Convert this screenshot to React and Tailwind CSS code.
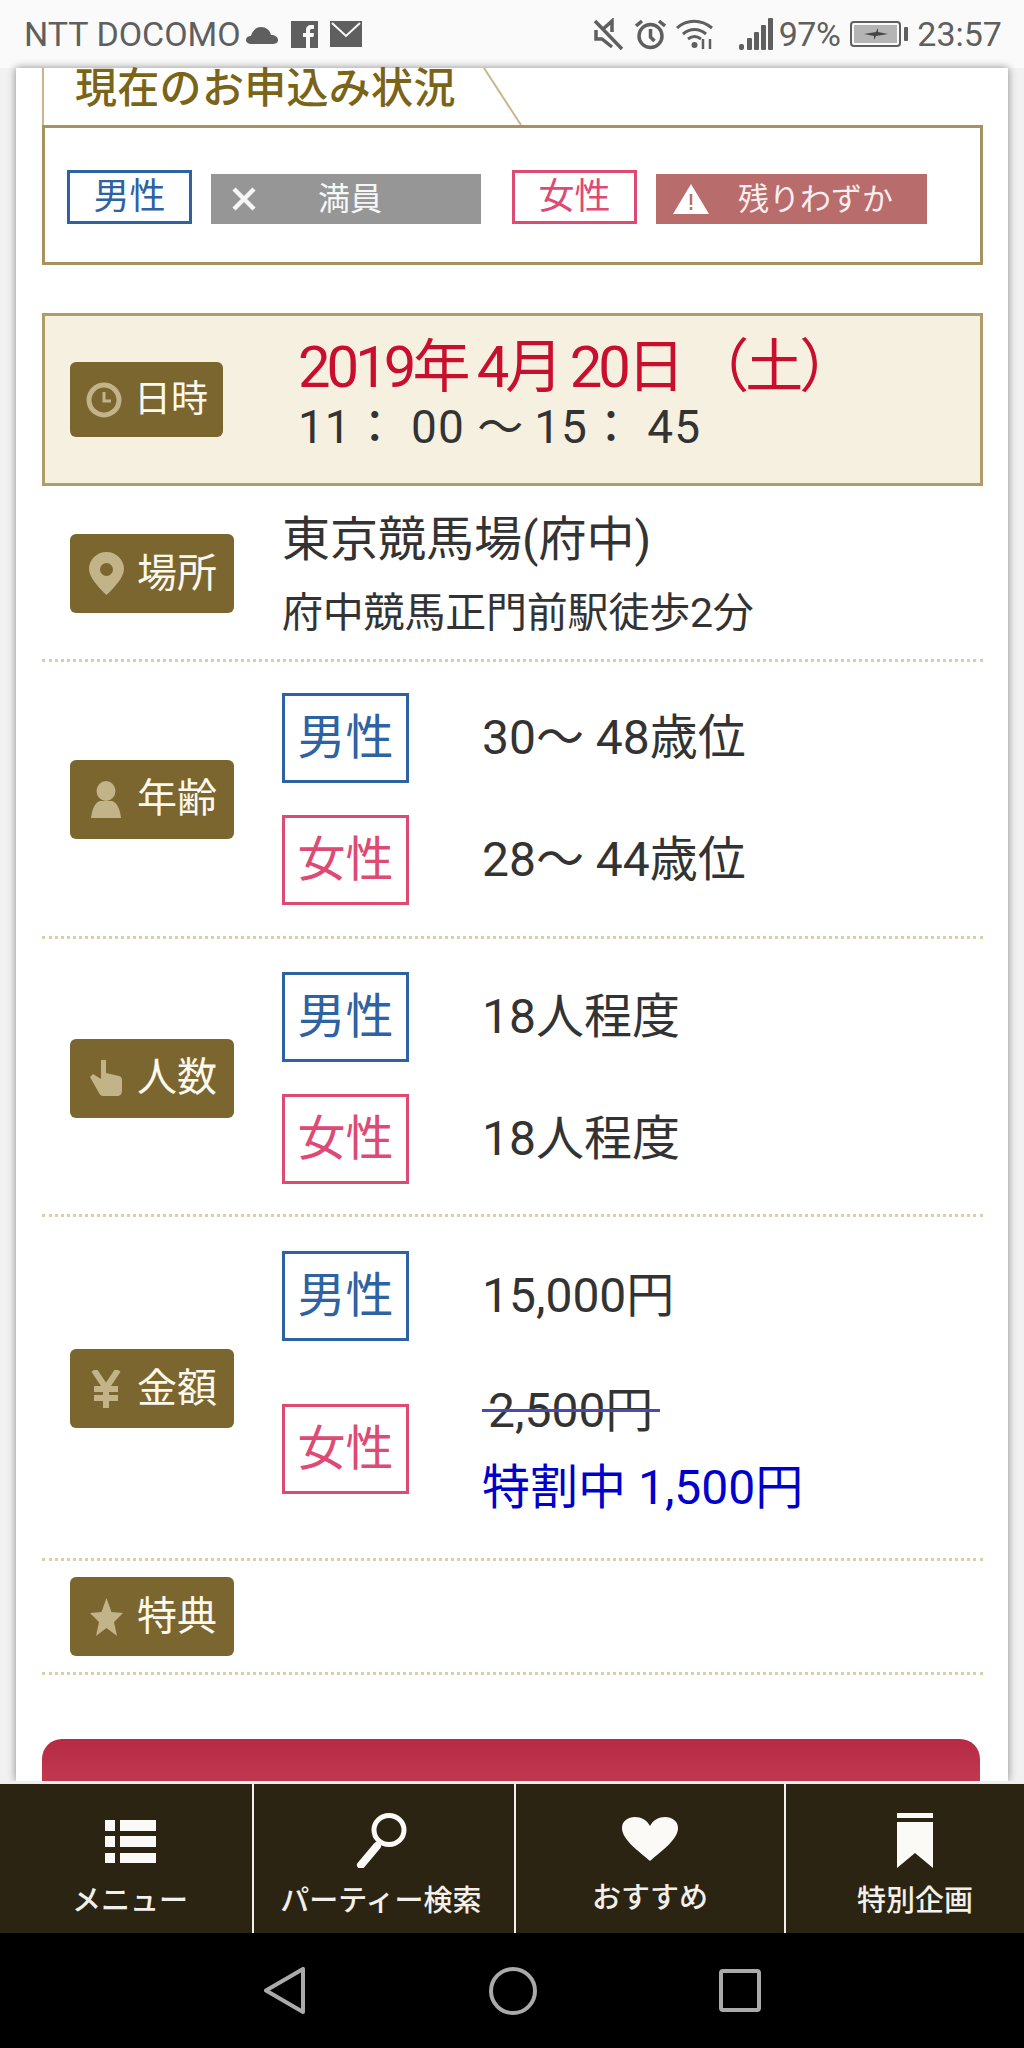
const blue = "border-[#2d62a3] text-[#2d62a3]";
const pink = "border-[#dd4a74] text-[#dd4a74]";

function Gender({ female, small }) {
  const tone = female ? pink : blue;
  if (small) {
    return (
      <div className={`flex h-[54px] w-[125px] items-center justify-center border-[3px] text-[36px] leading-none ${tone}`}>
        {female ? "女性" : "男性"}
      </div>
    );
  }
  return (
    <div className={`flex h-[90px] w-[127px] shrink-0 items-center justify-center border-[3px] text-[48px] leading-none ${tone}`}>
      {female ? "女性" : "男性"}
    </div>
  );
}

function Badge({ icon, children, narrow }) {
  return (
    <div className={`flex shrink-0 items-center rounded-[6px] bg-[#7b6630] text-[#fbf8ee] ${narrow ? "h-[75px] w-[153px] pl-[16px]" : "h-[79px] w-[164px] pl-[18px]"}`}>
      <div className="flex w-[36px] shrink-0 justify-center">{icon}</div>
      <span className={`leading-none ${narrow ? "ml-[12px] text-[37px]" : "ml-[13px] text-[40px]"}`}>{children}</span>
    </div>
  );
}

const iconTint = "#c2b388";

const ClockIcon = () => (
  <svg width="36" height="36" viewBox="0 0 36 36" fill="none" stroke={iconTint}>
    <circle cx="18" cy="18" r="15" strokeWidth="5" />
    <path d="M18 10v9h7" strokeWidth="3" />
  </svg>
);
const PinIcon = () => (
  <svg width="35" height="43" viewBox="0 0 35 43" fill={iconTint}>
    <path fillRule="evenodd" d="M17.5 0C7.8 0 0 7.6 0 17c0 8 9 18 17.5 26C26 35 35 25 35 17 35 7.6 27.200 0 17.500 0Zm0 11a6.500 6.500 0 1 1 0 13 6.500 6.500 0 0 1 0-13Z" />
  </svg>
);
const PersonIcon = () => (
  <svg width="30" height="37" viewBox="0 0 30 37" fill={iconTint}>
    <ellipse cx="15" cy="10" rx="9.500" ry="10" />
    <path d="M9 20h12c5 1.500 8 8 9 17H0C1 28 4 21.500 9 20Z" />
  </svg>
);
const HandIcon = () => (
  <svg width="32" height="36" viewBox="0 0 32 36" fill={iconTint}>
    <path d="M11 0h5v13l13 3c2 .500 3 2 3 4v11c0 3-2 5-5 5H13c-2 0-3-1-4-3L0 17l3-3 8 5Z" />
  </svg>
);
const YenIcon = () => (
  <svg width="30" height="38" viewBox="0 0 30 38" fill="none" stroke={iconTint} strokeWidth="6">
    <path d="M3 0l12 18L27 0M15 18v20M3 19h24M3 28h24" />
  </svg>
);
const StarIcon = () => (
  <svg width="33" height="38" viewBox="0 0 33 38" fill={iconTint}>
    <path d="M16.500 0l5 14 11.500 1-9 9 3 14-10.500-8L6 38l3-14-9-9 11.500-1Z" />
  </svg>
);

function StatusBar() {
  return (
    <div className="flex h-[68px] shrink-0 items-center bg-[#fafafa] pl-[24px] text-[34px] leading-none text-[#5f5f5f]">
      <span>NTT DOCOMO</span>
      <svg className="ml-[5px]" width="32" height="19" viewBox="0 0 32 19" fill="#5f5f5f">
        <path d="M6 19c-3.500 0-6-1.500-6-4s2-4 5-4c1-5 5-9 10-9 5 0 9 3 10 8 4 0 7 2 7 5s-2.500 4-6 4Z" />
      </svg>
      <svg className="ml-[13px]" width="27" height="27" viewBox="0 0 27 27">
        <rect width="27" height="27" fill="#5f5f5f" />
        <path d="M15 27V16h-3v-4h3V9c0-3 2-5 5-5h3v4h-2c-1.500 0-2 .500-2 2v2h4l-.500 4H19v11Z" fill="#fafafa" />
      </svg>
      <svg className="ml-[12px]" width="32" height="26" viewBox="0 0 32 26">
        <rect width="32" height="26" fill="#5f5f5f" />
        <path d="M2 2l14 13L30 2" fill="none" stroke="#fafafa" strokeWidth="2" />
      </svg>

      {/* right side */}
      <svg className="ml-[231px]" width="31" height="32" viewBox="0 0 31 32" fill="none" stroke="#5f5f5f" strokeWidth="3.500">
        <path d="M2 3l27 28M3 12v9h6l10 8M9 12l10-9v11" />
      </svg>
      <svg className="ml-[11px]" width="31" height="31" viewBox="0 0 31 31" fill="none" stroke="#5f5f5f" strokeWidth="3.500">
        <circle cx="15.500" cy="17" r="11.500" />
        <path d="M15.500 10v8l4 4M1 7l6-5M30 7l-6-5" />
      </svg>
      <svg className="ml-[10px]" width="38" height="30" viewBox="0 0 38 30" fill="none" stroke="#5f5f5f" strokeWidth="3">
        <path d="M1 9c10-9 24-9 35 0M7 15c7-6 16-6 23 0M12 20c4-3 9-3 13 0" />
        <circle cx="18.500" cy="26" r="3" fill="#5f5f5f" stroke="none" />
        <path d="M27 30V20M34 30V20" strokeWidth="2.500" />
      </svg>
      <svg className="ml-[25px]" width="34" height="32" viewBox="0 0 34 32" fill="#5f5f5f">
        <rect x="0" y="26" width="5" height="6" rx="2" />
        <rect x="8" y="20" width="5" height="12" rx="1" />
        <rect x="15" y="14" width="5" height="18" rx="1" />
        <rect x="22" y="7" width="5" height="25" rx="1" />
        <rect x="29" y="0" width="5" height="32" rx="1" />
      </svg>
      <span className="ml-[6px] tracking-[-0.5px]">97%</span>
      <svg className="ml-[10px]" width="58" height="26" viewBox="0 0 58 26">
        <rect x="1" y="1" width="49" height="24" rx="3" fill="none" stroke="#5f5f5f" strokeWidth="2" />
        <rect x="4" y="4" width="43" height="18" fill="#b4b4b4" />
        <rect x="54" y="6" width="4" height="14" rx="1" fill="#5f5f5f" />
        <path d="M14 13l12-2 2-4v4l10 2-12 2-2 4v-4Z" fill="#454545" />
      </svg>
      <span className="ml-[9px]">23:57</span>
    </div>
  );
}

function Legend() {
  return (
    <div>
      <div className="relative h-[57px] border-l-[2px] border-[#c9b68e] pl-[31px] text-[42px] leading-[42px] font-medium tracking-[0.3px] text-[#7a6418]">
        現在のお申込み状況
        <svg className="absolute top-0 left-[439px]" width="40" height="57" viewBox="0 0 40 57" fill="none" stroke="#c9b68e" strokeWidth="2">
          <path d="M1 0l37 57" />
        </svg>
      </div>
      <div className="flex h-[140px] items-start border-[3px] border-[#a8915f] pt-[42px] pl-[22px]">
        <Gender small />
        <div className="mt-[4px] ml-[19px] flex h-[50px] w-[270px] items-center bg-[#969696] pl-[21px] text-[32px] leading-none text-[#f6f6f6]">
          <svg width="24" height="24" viewBox="0 0 24 24" stroke="#f6f6f6" strokeWidth="4.500">
            <path d="M2 2l20 20M22 2L2 22" />
          </svg>
          <span className="ml-[62px]">満員</span>
        </div>
        <div className="ml-[31px]">
          <Gender small female />
        </div>
        <div className="mt-[4px] ml-[19px] flex h-[50px] w-[271px] items-center bg-[#b96c6c] pl-[17px] text-[31px] leading-none text-[#fbeeee]">
          <svg width="36" height="30" viewBox="0 0 36 30">
            <path d="M18 0l18 30H0Z" fill="#fff" />
            <path d="M18 10v11M18 23v3" stroke="#b96c6c" strokeWidth="2.500" />
          </svg>
          <span className="ml-[29px]">残りわずか</span>
        </div>
      </div>
    </div>
  );
}

function GenderRow({ female, children }) {
  return (
    <div className="flex items-center">
      <Gender female={female} />
      <div className="ml-[73px] text-[48px] leading-none text-[#333]">{children}</div>
    </div>
  );
}

function InfoRow({ icon, label, className, children }) {
  return (
    <div className={`flex items-center border-b-[3px] border-dotted border-[#d9d0a8] pl-[28px] ${className}`}>
      <Badge icon={icon}>{label}</Badge>
      <div className="ml-[48px] grow">{children}</div>
    </div>
  );
}

function BottomNav() {
  return (
    <div className="grid h-[152px] shrink-0 grid-cols-[254px_262px_270px_1fr] border-t-[3px] border-[#eeeeee] bg-[#2c2412] text-[29px] leading-none font-medium text-[#f2f0ea]">
      <div className="flex flex-col items-center border-r-[2px] border-[#f2f0ea] pt-[29px] pl-[8px]">
        <svg width="51" height="55" viewBox="0 0 51 55" fill="#fbfaf6">
          <path d="M0 7h10v11H0zM15 7h36v11H15zM0 23h10v11H0zM15 23h36v11H15zM0 40h10v10H0zM15 40h36v10H15z" />
        </svg>
        <span className="mt-[19px]">メニュー</span>
      </div>
      <div className="flex flex-col items-center border-r-[2px] border-[#f2f0ea] pt-[29px] pr-[6px]">
        <svg width="52" height="55" viewBox="0 0 52 55" fill="none" stroke="#fbfaf6">
          <ellipse cx="34" cy="17" rx="15" ry="14.500" strokeWidth="5" />
          <path d="M22 33L6 52" strokeWidth="8" strokeLinecap="round" />
        </svg>
        <span className="mt-[19px]">パーティー検索</span>
      </div>
      <div className="flex flex-col items-center border-r-[2px] border-[#f2f0ea] pt-[29px]">
        <svg width="56" height="55" viewBox="0 0 56 55" fill="#fbfaf6">
          <path d="M28 48C14 36 0 26 0 15 0 8 6 4 13 4c6 0 12 3 15 9 3-6 9-9 15-9 7 0 13 4 13 11 0 11-14 21-28 33Z" />
        </svg>
        <span className="mt-[16px]">おすすめ</span>
      </div>
      <div className="flex flex-col items-center pt-[29px] pl-[20px]">
        <svg width="36" height="55" viewBox="0 0 36 55" fill="#fbfaf6">
          <path d="M0 0h36v5H0zM0 9h36v46L18 40 0 55Z" />
        </svg>
        <span className="mt-[19px]">特別企画</span>
      </div>
    </div>
  );
}

function SystemBar() {
  return (
    <div className="flex h-[115px] shrink-0 items-start bg-black pt-[34px] pl-[263px]">
      <svg width="42" height="47" viewBox="0 0 42 47" fill="none" stroke="#aaaaaa" strokeWidth="4" strokeLinejoin="round">
        <path d="M40 2v43L3 23.500Z" />
      </svg>
      <svg className="ml-[184px]" width="48" height="48" viewBox="0 0 48 48" fill="none" stroke="#aaaaaa" strokeWidth="4">
        <circle cx="24" cy="24" r="22" />
      </svg>
      <svg className="mt-[2px] ml-[182px]" width="42" height="43" viewBox="0 0 42 43" fill="none" stroke="#aaaaaa" strokeWidth="4">
        <rect x="2" y="2" width="38" height="39" rx="2" />
      </svg>
    </div>
  );
}

export default function App() {
  return (
    <div className="flex h-[2048px] w-[1024px] flex-col overflow-hidden bg-[#f1f1f1] font-[Roboto,'Noto_Sans_CJK_JP',sans-serif]">
      <StatusBar />

      <main className="mx-[16px] h-[1713px] shrink-0 bg-white pr-[25px] pl-[26px] shadow-[0_0_8px_rgba(0,0,0,0.45)]">
        <Legend />

        {/* Date */}
        <div className="mt-[48px] flex h-[173px] items-center border-[3px] border-[#b09c6a] bg-[#f6f0e0] pl-[25px]">
          <Badge icon={<ClockIcon />} narrow>日時</Badge>
          <div className="mb-[13px] ml-[75px]">
            <div className="text-[58px] leading-[66px] tracking-[-4px] text-[#c8102e]">2019年 4月 20日 （土）</div>
            <div className="mt-[2px] text-[46px] leading-[50px] tracking-[1px] text-[#333]">
              11： 00 ～<span className="ml-[10px]">15： 45</span>
            </div>
          </div>
        </div>

        <InfoRow icon={<PinIcon />} label="場所" className="h-[176px] pt-[2px]">
          <div className="text-[48px] leading-[60px] text-[#333]">東京競馬場(府中)</div>
          <div className="mt-[18px] text-[41px] leading-[50px] tracking-[-0.2px] text-[#333]">府中競馬正門前駅徒歩2分</div>
        </InfoRow>

        <InfoRow icon={<PersonIcon />} label="年齢" className="pt-[31px] pb-[31px]">
          <div className="flex flex-col gap-[32px]">
            <GenderRow>30～ 48歳位</GenderRow>
            <GenderRow female>28～ 44歳位</GenderRow>
          </div>
        </InfoRow>

        <InfoRow icon={<HandIcon />} label="人数" className="pt-[33px] pb-[30px]">
          <div className="flex flex-col gap-[32px]">
            <GenderRow>18人程度</GenderRow>
            <GenderRow female>18人程度</GenderRow>
          </div>
        </InfoRow>

        <InfoRow icon={<YenIcon />} label="金額" className="pt-[34px] pb-[32px]">
          <div className="flex flex-col gap-[31px]">
            <GenderRow>15,000円</GenderRow>
            <GenderRow female>
              <div className="flex flex-col">
                <div className="relative h-[77px] pl-[6px] leading-[77px]">
                  2,500円
                  <div className="absolute top-[37px] left-0 h-[3px] w-[178px] bg-[#4a4ab0]" />
                </div>
                <div className="h-[77px] leading-[77px] text-[#0000cc]">特割中 1,500円</div>
              </div>
            </GenderRow>
          </div>
        </InfoRow>

        <InfoRow icon={<StarIcon />} label="特典" className="h-[114px]" />

        <div className="mt-[64px] mr-[3px] h-[42px] rounded-t-[20px] bg-gradient-to-b from-[#b72a45] to-[#c03850]" />
      </main>

      <BottomNav />
      <SystemBar />
    </div>
  );
}
